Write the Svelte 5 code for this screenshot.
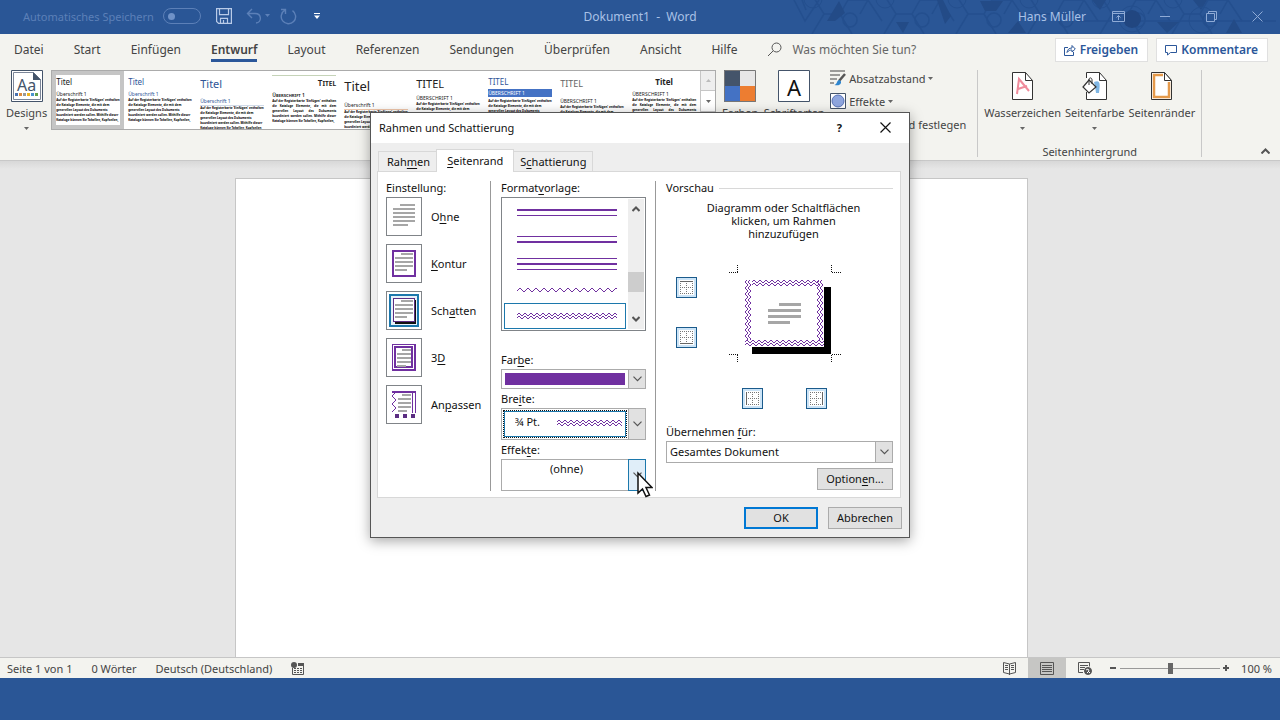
<script>
  const tabs = ['Datei', 'Start', 'Einfügen', 'Entwurf', 'Layout', 'Referenzen', 'Sendungen', 'Überprüfen', 'Ansicht', 'Hilfe'];
  let activeTab = $state('Entwurf');

  const sample = "Auf der Registerkarte 'Einfügen' enthalten die Kataloge Elemente, die mit dem generellen Layout des Dokuments koordiniert werden sollen. Mithilfe dieser Kataloge können Sie Tabellen, Kopfzeilen,";
  const themes = [
    { title: 'Titel', heading: 'Überschrift 1', look: 'plain', selected: true },
    { title: 'Titel', heading: 'Überschrift 1', look: 'blue' },
    { title: 'Titel', heading: 'Überschrift 1', look: 'blue large lined' },
    { title: 'Titel', heading: 'Überschrift 1', look: 'caps right' },
    { title: 'Titel', heading: 'Überschrift 1', look: 'huge lined warm' },
    { title: 'TITEL', heading: 'ÜBERSCHRIFT 1', look: 'large' },
    { title: 'TITEL', heading: 'ÜBERSCHRIFT 1', look: 'blue band' },
    { title: 'TITEL', heading: 'ÜBERSCHRIFT 1', look: 'grey' },
    { title: 'Titel', heading: 'ÜBERSCHRIFT 1', look: 'center' },
  ];

  // ── Dialog state ───────────────────────────────────────────────────────────
  // labels are split as [before, access key, after]
  const pages = [['Rah', 'm', 'en'], ['', 'S', 'eitenrand'], ['S', 'c', 'hattierung']];
  let page = $state(1);

  const settings = [
    { id: 'none', label: ['O', 'h', 'ne'] },
    { id: 'box', label: ['', 'K', 'ontur'] },
    { id: 'shadow', label: ['Sch', 'a', 'tten'] },
    { id: 'threed', label: ['3', 'D', ''] },
    { id: 'custom', label: ['An', 'p', 'assen'] },
  ];
  let setting = $state('shadow');

  const lineStyles = ['thick-thin', 'thin-thick', 'thin-thick-thin', 'wave', 'double-wave'];
  let lineStyle = $state('double-wave');

  let color = $state('Lila');
  let width = $state('¾ Pt.');
  let effect = $state('(ohne)');
  let scope = $state('Gesamtes Dokument');
  let zoom = $state(100);

  // ── Wave helpers ───────────────────────────────────────────────────────────
  const WIDE = [2, 1, 0, 0, 1, 2, 3, 3];
  const TIGHT = [1, 0, 0, 1, 2, 2];

  function wave(x, y, length, profile = WIDE, vertical = false) {
    let d = '';
    for (let i = 0; i <= length; i += 1) {
      const off = profile[i % profile.length];
      const px = vertical ? x + off : x + i;
      const py = vertical ? y + i : y + off;
      d += `M${px} ${py}h1v1h-1z`;
    }
    return d;
  }

  // two parallel waves, 3px apart
  function doubleWave(x, y, length, vertical = false) {
    return wave(x, y, length, TIGHT, vertical) + wave(vertical ? x + 3 : x, vertical ? y : y + 3, length, TIGHT, vertical);
  }

  // header ornament: one cell repeats every 72px
  const cells = [1, 2, 3, 4, 5, 6].map((i) => i * 72 + 2);
</script>

{#snippet key(parts)}{parts[0]}<u>{parts[1]}</u>{parts[2]}{/snippet}

{#snippet caret()}
  <svg class="caret" width="5" height="3" viewBox="0 0 5 3"><path d="M0 0h5L2.500 3z" fill="#666" /></svg>
{/snippet}

{#snippet chevron()}
  <svg width="9" height="6" viewBox="0 0 9 6"><path d="M.5 .7l4 4 4-4" fill="none" stroke="#555" stroke-width="1.200" /></svg>
{/snippet}

{#snippet textLines(x, y, w, gap, c)}
  <path d="M{x + w / 3} {y}h{w * 2 / 3}M{x} {y + gap}h{w}M{x} {y + gap * 2}h{w}M{x} {y + gap * 3}h{w}M{x} {y + gap * 4}h{w * 2 / 3}" stroke={c} stroke-width="2" />
{/snippet}

{#snippet edgeIcon(edge)}
  <svg width="15" height="15" viewBox="0 0 15 15" shape-rendering="crispEdges">
    <path d="M0 0h15v15h-15z" fill="#fff" />
    <path d="M1 1.500h13M1 7.500h13M1 13.500h13M1.500 1v13M7.500 1v13M13.500 1v13" stroke="#777" stroke-dasharray="1 1" />
    <path d={{ top: 'M1 1.500h13', bottom: 'M1 13.500h13', left: 'M1.500 1v13', right: 'M13.500 1v13' }[edge]} stroke="#666" />
  </svg>
{/snippet}

<div class="window">
  <header class="titlebar">
    <svg class="lattice" width="540" height="34" viewBox="0 0 540 34" fill="none" stroke="#244f8e">
      {#each cells as x}
        <path d="M{x} -2l10 16h16l8 -14M{x + 10} 14l-12 20M{x + 26} 14l12 20M{x + 34} 0h20l14 21M{x + 54} 0l-8 14" stroke-width="1.500" />
        <circle cx={x + 36} cy="20" r="7" stroke-width="1.500" />
        <circle cx={x - 1} cy="-1" r="9" />
      {/each}
      <path d="M54 0l11 21 14-21M62 0l4 10M336 21h200" stroke-width="1.500" />
      <path d="M87 21l12-20 6 12-10 8zM156 22h13l-6 11zM197 0h6l8 16-6 8zM240 1h23l-7 10h-11zM352 0h14l-6 10zM417 22h22l-12 11zM453 0h14l-6 10zM486 33l8-14 8 14zM268 33l10-12 8 12z" fill="#234b87" stroke="none" />
      <circle cx="392" cy="19" r="9" fill="#214680" stroke="none" /><circle cx="392" cy="19" r="13" /><circle cx="462" cy="20" r="13" />
    </svg>
    <div class="quick">
      <span class="autosave">Automatisches Speichern</span>
      <button class="toggle" aria-label="Automatisches Speichern"><span></span></button>
      <button class="save" aria-label="Speichern">
        <svg width="16" height="16" viewBox="0 0 16 16" fill="none" stroke="#b9cbe8" stroke-width="1.200"><path d="M.6 .6h14.800v14.800H2.600l-2-2zM3.500 .6v6h9v-6M4.500 15.400v-5h7v5M7.500 12v3" /></svg>
      </button>
      <button class="undo" aria-label="Rückgängig">
        <svg width="25" height="16" viewBox="0 0 25 16" fill="none" stroke="#5c80b8" stroke-width="1.400"><path d="M6 1L1.500 5.500 6 10M1.500 5.500H9c7 0 7 9 1 9.500" /><path d="M19 6h5l-2.500 3z" fill="#5c80b8" stroke="none" /></svg>
      </button>
      <button class="redo" aria-label="Wiederholen">
        <svg width="17" height="17" viewBox="0 0 17 17" fill="none" stroke="#5c80b8" stroke-width="1.400"><path d="M5 2.200A7.200 7.200 0 1 0 12.500 2.600M1 1.500h4.500V6" /></svg>
      </button>
      <button class="more" aria-label="Symbolleiste anpassen">
        <svg width="6" height="6" viewBox="0 0 6 6" fill="#fff"><path d="M0 0h6v1H0zM0 2.500h6L3 6z" /></svg>
      </button>
    </div>
    <div class="doc-title">Dokument1&nbsp; -&nbsp; Word</div>
    <div class="account">
      <span class="user">Hans Müller</span>
      <button aria-label="Menüband-Anzeigeoptionen"><svg width="13" height="11" viewBox="0 0 13 11" fill="none" stroke="#8fabd6"><path d="M.5 .5h12v10H.5zM.5 2.500h12M6.500 9V4.500M4.500 6.500l2-2 2 2" /></svg></button>
      <button aria-label="Minimieren"><svg width="11" height="11" viewBox="0 0 11 11"><path d="M0 5.500h10" stroke="#8fabd6" /></svg></button>
      <button aria-label="Verkleinern"><svg width="11" height="11" viewBox="0 0 11 11" fill="none" stroke="#8fabd6"><path d="M.5 2.500h8v8h-8zM2.500 2.500v-2h8v8h-2" /></svg></button>
      <button aria-label="Schließen"><svg width="11" height="11" viewBox="0 0 11 11"><path d="M.5 .5l10 10M10.500 .5l-10 10" stroke="#8fabd6" /></svg></button>
    </div>
  </header>

  <nav class="tabs">
    {#each tabs as tab}
      <button class:active={tab === activeTab} onclick={() => (activeTab = tab)}>{tab}</button>
    {/each}
    <label class="tell-me">
      <svg width="15" height="15" viewBox="0 0 15 15" fill="none" stroke="#555"><circle cx="9.500" cy="5.500" r="4.500" /><path d="M6.200 8.800L1 14" /></svg>
      <input type="text" placeholder="Was möchten Sie tun?" aria-label="Was möchten Sie tun?" />
    </label>
    <button class="share">
      <svg width="12" height="12" viewBox="0 0 12 12" fill="none" stroke="#2b579a"><path d="M4 3.500H.5v8h9V8M3 8.500c.5-3 2-4.500 5-4.500V1.500L11.300 5 8 8V6c-2 0-3.500.5-5 2.500z" /></svg>
      Freigeben
    </button>
    <button class="share">
      <svg width="12" height="12" viewBox="0 0 12 12" fill="none" stroke="#2b579a"><path d="M.5 1.500h11v7H5.500l-3 2.500V8.500h-2z" /></svg>
      Kommentare
    </button>
  </nav>

  <section class="ribbon">
    <button class="big designs">
      <svg width="32" height="32" viewBox="0 0 32 32">
        <path d="M.5 .5h31v31H.5z" fill="#fff" stroke="#44546a" /><path d="M2.500 2.500h20l7 7v20h-27z" fill="#fff" stroke="#7c8698" /><path d="M22 2v8h8z" fill="#44546a" />
        <text x="6" y="21" font-size="16" fill="#44546a">Aa</text>
        <path d="M4 23h3v3H4z" fill="#4a72b0" /><path d="M8 23h3v3H8z" fill="#e08a3c" /><path d="M12 23h3v3h-3z" fill="#999" /><path d="M16 23h3v3h-3z" fill="#f0b41c" /><path d="M20 23h3v3h-3z" fill="#4b94cf" /><path d="M24 23h3v3h-3z" fill="#62a04a" />
      </svg>
      <span>Designs</span>
      {@render caret()}
    </button>

    <div class="gallery">
      {#each themes as t}
        <button class="theme {t.look}" class:selected={t.selected}>
          <strong>{t.title}</strong>
          <em>{t.heading}</em>
          <span>{sample}</span>
        </button>
      {/each}
      <div class="gallery-scroll">
        <button disabled aria-label="Nach oben"><svg width="5" height="3" viewBox="0 0 5 3"><path d="M0 3h5L2.500 0z" fill="#bbb" /></svg></button>
        <button aria-label="Nach unten">{@render caret()}</button>
        <button aria-label="Weitere">{@render caret()}</button>
      </div>
    </div>

    <button class="big colors">
      <svg width="32" height="32" viewBox="0 0 32 32"><path d="M0 0h16v16H0z" fill="#44546a" /><path d="M16 0h16v16H16z" fill="#e7e6e6" /><path d="M0 16h16v16H0z" fill="#4472c4" /><path d="M16 16h16v16H16z" fill="#ed7d31" /><path d="M.5 .5h31v31H.5z" fill="none" stroke="#777" /></svg>
      <span>Farben</span>
    </button>
    <button class="big fonts">
      <svg width="32" height="32" viewBox="0 0 32 32"><path d="M.5 .5h31v31H.5z" fill="#fff" stroke="#44546a" /><text x="16" y="26" font-size="22" text-anchor="middle" fill="#111">A</text></svg>
      <span>Schriftarten</span>
    </button>
    <div class="stack">
      <button>
        <svg width="16" height="16" viewBox="0 0 16 16"><path d="M0 1h15M0 5h10M0 9h7M0 13h4" stroke="#444" stroke-width="1.200" /><path d="M15 4l-6 7" stroke="#555" stroke-width="2.500" /><path d="M9.500 10c-3 0-2 4-5 5 3 1 7 0 6.500-3.500z" fill="#2e86cf" /></svg>
        Absatzabstand {@render caret()}
      </button>
      <button>
        <svg width="16" height="16" viewBox="0 0 16 16"><path d="M.5 .5h15v15H.5z" fill="#fff" stroke="#44546a" /><circle cx="8" cy="8" r="6" fill="#8fa6de" stroke="#5571b5" /></svg>
        Effekte {@render caret()}
      </button>
      <button>Als Standard festlegen</button>
    </div>

    <div class="group">
      <div class="group-row">
        <button class="big">
          <svg width="22" height="28" viewBox="0 0 22 28"><path d="M.5 .5h13l7 8v19H.5z" fill="#fff" stroke="#333" /><path d="M13.500 .5v8h7" fill="none" stroke="#333" /><path d="M5 22L7 7l10 12M6 17l9-3" fill="none" stroke="#f08b9b" stroke-width="2" /></svg>
          <span>Wasserzeichen</span>{@render caret()}
        </button>
        <button class="big">
          <svg width="26" height="28" viewBox="0 0 26 28"><path d="M4.500 6V.5h13l7 8v19h-20V20" fill="#fff" stroke="#333" /><path d="M17.500 .5v8h7" fill="none" stroke="#333" /><path d="M12 10c7-3 6 3 5 11h-3l-1-7z" fill="#7fb6e4" /><path d="M7 8l7 7-7 6-6-6z" fill="#fff" stroke="#333" stroke-width="1.200" /><path d="M7 13V7c1-2 3-1 3 1v4" fill="none" stroke="#333" /></svg>
          <span>Seitenfarbe</span>{@render caret()}
        </button>
        <button class="big">
          <svg width="22" height="28" viewBox="0 0 22 28"><path d="M.5 .5h13l7 8v19H.5z" fill="#fff" stroke="#333" /><path d="M12 3H3v22h15V10" fill="none" stroke="#e59a4b" stroke-width="2.500" /><path d="M13.500 .5v8h7z" fill="#fff" stroke="#333" /></svg>
          <span>Seitenränder</span>
        </button>
      </div>
      <div class="group-name">Seitenhintergrund</div>
    </div>
    <button class="collapse" aria-label="Menüband reduzieren"><svg width="9" height="6" viewBox="0 0 9 6"><path d="M.5 5.500l4-4 4 4" fill="none" stroke="#555" stroke-width="2" /></svg></button>
  </section>

  <main class="workspace"><div class="paper"></div></main>

  <footer class="status">
    <span>Seite 1 von 1</span>
    <span>0 Wörter</span>
    <span>Deutsch (Deutschland)</span>
    <svg width="13" height="13" viewBox="0 0 13 13"><path d="M1.500 6v6.500h11V3M3 6.500h8M3 8.500h8M3 10.500h8" fill="none" stroke="#555" /><path d="M5.500 5v7M8.500 5v7" stroke="#f3f3ef" /><circle cx="3" cy="3" r="3" fill="#555" /><path d="M7 1h6v3H7z" fill="#555" /></svg>
    <div class="views">
      <button aria-label="Lesemodus"><svg width="13" height="13" viewBox="0 0 13 13" fill="none" stroke="#555"><path d="M6.500 2L.5 .5v10l6 1.500 6-1.500V.5zM6.500 2v11M2 3.500h3M2 5.500h3M2 7.500h3M8 3.500h3M8 5.500h3M8 7.500h3" /></svg></button>
      <button class="on" aria-label="Drucklayout"><svg width="14" height="13" viewBox="0 0 14 13" fill="none" stroke="#555"><path d="M.5 .5h13v12H.5zM2 3.500h10M2 5.500h10M2 7.500h10M2 9.500h10" /></svg></button>
      <button aria-label="Weblayout"><svg width="14" height="13" viewBox="0 0 14 13" fill="none" stroke="#555"><path d="M5 10.500H.5V.5h11v4M2 3.500h8M2 5.500h5M2 7.500h4" /><circle cx="10" cy="9" r="3.500" fill="#555" /><path d="M8 8l2-1 1 2-2 2M11 11l1-1" stroke="#fff" /></svg></button>
    </div>
    <button class="step" aria-label="Verkleinern"><svg width="6" height="6" viewBox="0 0 6 6"><path d="M0 3h6" stroke="#555" stroke-width="2" /></svg></button>
    <input type="range" min="10" max="190" bind:value={zoom} aria-label="Zoom" />
    <button class="step" aria-label="Vergrößern"><svg width="8" height="8" viewBox="0 0 8 8"><path d="M1 4h6M4 1v6" stroke="#555" stroke-width="2" /></svg></button>
    <span class="percent">{zoom} %</span>
  </footer>
  <div class="taskband"></div>

  <div class="dialog" role="dialog" aria-labelledby="dialog-title">
    <div class="dialog-head">
      <h1 id="dialog-title">Rahmen und Schattierung</h1>
      <button aria-label="Hilfe"><b>?</b></button>
      <button aria-label="Schließen"><svg width="11" height="11" viewBox="0 0 11 11"><path d="M.5 .5l10 10M10.500 .5l-10 10" stroke="#111" stroke-width="1.200" /></svg></button>
    </div>

    <div class="page-tabs" role="tablist">
      {#each pages as p, i}
        <button role="tab" aria-selected={i === page} class:active={i === page} onclick={() => (page = i)}>{@render key(p)}</button>
      {/each}
    </div>

    <div class="panel">
      <fieldset class="col settings">
        <legend>Einstellung:</legend>
        {#each settings as s}
          <label class="setting">
            <input type="radio" name="setting" value={s.id} bind:group={setting} />
            <svg width="36" height="39" viewBox="0 0 36 39" shape-rendering="crispEdges">
              <path d="M.5 .5h35v38H.5z" fill="#fff" stroke="#808488" />
              {#if s.id === setting}<path d="M4 4h28v31H4z" fill="#e6f1fa" stroke="#1c78ac" stroke-width="2" />{/if}
              {#if s.id === 'none'}
                {@render textLines(7, 8, 22, 4, '#a6a6a6')}
                <path d="M22 24h7M7 28h15" stroke="#a6a6a6" stroke-width="2" />
              {:else if s.id === 'box'}
                <path d="M7 7h22v25H7z" fill="#fff" stroke="#7030a0" stroke-width="2" />
                {@render textLines(9, 10, 18, 4, '#a6a6a6')}
              {:else if s.id === 'shadow'}
                <path d="M9 9h21v24H9z" fill="#111" />
                <path d="M7.500 7.500h21v23h-21z" fill="#fff" stroke="#5b2d82" />
                {@render textLines(9, 10, 18, 4, '#a6a6a6')}
              {:else if s.id === 'threed'}
                <path d="M6.500 6.500h23v26h-23z" fill="#fff" stroke="#7030a0" /><path d="M6 32h24M29 6v26" stroke="#7030a0" stroke-width="2" />
                <path d="M9 9h17v20H9z" fill="#fff" stroke="#7030a0" stroke-width="2" />
                {@render textLines(11, 12, 14, 4, '#a6a6a6')}
              {:else}
                <path d="M6 7h24" stroke="#7030a0" stroke-width="2" /><path d="M26.500 7v21M29.500 7v21" stroke="#7030a0" />
                <path d={wave(6, 8, 18, WIDE, true)} fill="#7030a0" />
                <path d="M9 29h4v4H9zM17 29h4v4h-4zM25 29h4v4h-4z" fill="#5b2d82" />
                {@render textLines(12, 10, 13, 4, '#a6a6a6')}
              {/if}
            </svg>
            <span>{@render key(s.label)}</span>
          </label>
        {/each}
      </fieldset>

      <div class="col line">
        <span class="caption" id="style-label">Format<u>v</u>orlage:</span>
        <div class="listbox">
          <div class="options" role="listbox" aria-labelledby="style-label">
            {#each lineStyles as l}
              <button role="option" aria-selected={l === lineStyle} aria-label={l} class:chosen={l === lineStyle} onclick={() => (lineStyle = l)}>
                <svg width="100" height="12" viewBox="0 0 100 12" shape-rendering="crispEdges" stroke="#7030a0">
                  {#if l === 'thick-thin'}<path d="M0 4h100" stroke-width="2" /><path d="M0 9.500h100" />
                  {:else if l === 'thin-thick'}<path d="M0 4.500h100" /><path d="M0 10h100" stroke-width="2" />
                  {:else if l === 'thin-thick-thin'}<path d="M0 .5h100M0 11.500h100" /><path d="M0 6h100" stroke-width="2" />
                  {:else if l === 'wave'}<path d={wave(0, 4, 99)} fill="#7030a0" stroke="none" />
                  {:else}<path d={doubleWave(0, 3, 99)} fill="#7030a0" stroke="none" />{/if}
                </svg>
              </button>
            {/each}
          </div>
          <div class="scroll">
            <button aria-label="Nach oben"><svg width="8" height="6" viewBox="0 0 8 6"><path d="M.5 5l3.500-3.500L7.500 5" fill="none" stroke="#555" stroke-width="2" /></svg></button>
            <div class="thumb"></div>
            <button aria-label="Nach unten"><svg width="8" height="6" viewBox="0 0 8 6"><path d="M.5 1l3.500 3.500L7.500 1" fill="none" stroke="#555" stroke-width="2" /></svg></button>
          </div>
        </div>

        <label class="caption first" for="color">Far<u>b</u>e:</label>
        <div class="combo color">
          <select id="color" bind:value={color}><option>Lila</option></select>
          <span class="swatch"></span>
          <span class="drop">{@render chevron()}</span>
        </div>

        <label class="caption" for="width">Bre<u>i</u>te:</label>
        <div class="combo tall width">
          <select id="width" bind:value={width}><option>¾ Pt.</option></select>
          <svg class="sample" width="65" height="6" viewBox="0 0 65 6" shape-rendering="crispEdges"><path d={doubleWave(0, 0, 64)} fill="#7030a0" /></svg>
          <span class="drop">{@render chevron()}</span>
        </div>

        <label class="caption" for="effect">Effek<u>t</u>e:</label>
        <div class="combo tall effect">
          <select id="effect" bind:value={effect}><option>(ohne)</option></select>
          <span class="drop hot">{@render chevron()}</span>
          <svg class="pointer" width="17" height="28" viewBox="0 0 17 28"><path d="M2 2v20l4.500-4 3.500 7.500 3.500-1.500-3.500-7.500h6z" fill="#fff" stroke="#111" stroke-width="1.500" /></svg>
        </div>
      </div>

      <div class="col preview">
        <div class="caption ruled">Vorschau</div>
        <p>Diagramm oder Schaltflächen klicken, um Rahmen hinzuzufügen</p>
        <div class="diagram">
          <div class="sides">
            <button class="edge" aria-label="Rahmenlinie oben">{@render edgeIcon('top')}</button>
            <button class="edge" aria-label="Rahmenlinie unten">{@render edgeIcon('bottom')}</button>
          </div>
          <svg width="112" height="98" viewBox="729 264 112 98" shape-rendering="crispEdges">
            <path d="M729 272.500h9M737.500 265v7M832 272.500h9M831.500 265v7M729 354.500h9M737.500 355v7M832 354.500h9M831.500 355v7" stroke="#111" stroke-dasharray="1 1" />
            <path d="M752 287h79v67h-79z" fill="#000" />
            <path d="M745 280h79v67h-79z" fill="#fff" />
            <path d={doubleWave(752, 280, 66) + doubleWave(745, 340, 78)} fill="#7030a0" />
            <path d={doubleWave(745, 280, 59, true) + doubleWave(817, 280, 59, true)} fill="#7030a0" />
            <path d="M779 304.500h22M768 310.500h33M768 316.500h33M768 322.500h22" stroke="#a6a6a6" stroke-width="3" />
          </svg>
          <div class="ends">
            <button class="edge" aria-label="Rahmenlinie links">{@render edgeIcon('left')}</button>
            <button class="edge" aria-label="Rahmenlinie rechts">{@render edgeIcon('right')}</button>
          </div>
        </div>
        <label class="caption" for="scope">Übernehmen <u>f</u>ür:</label>
        <div class="combo scope">
          <select id="scope" bind:value={scope}><option>Gesamtes Dokument</option></select>
          <span class="drop">{@render chevron()}</span>
        </div>
        <button class="push options-btn">Option<u>e</u>n...</button>
      </div>
    </div>

    <div class="dialog-foot">
      <button class="push default">OK</button>
      <button class="push">Abbrechen</button>
    </div>
  </div>
</div>

<style>
  :global(body) {
    margin: 0;
    font-family: "Noto Sans", "Open Sans", sans-serif;
    background: #2a5696;
  }

  .window {
    position: relative;
    display: flex;
    flex-direction: column;
    min-height: 100vh;
    font-size: 11px;
    color: #444;
    box-sizing: border-box;
  }

  .window * { box-sizing: border-box; }
  svg { display: block; flex: none; }

  button {
    font: inherit;
    color: inherit;
    background: none;
    border: 0;
    padding: 0;
    margin: 0;
    white-space: nowrap;
  }

  /* title bar */
  .titlebar {
    position: relative;
    display: grid;
    grid-template-columns: 1fr auto 1fr;
    align-items: center;
    height: 34px;
    padding-bottom: 2px;
    font-size: 12px;
    color: #a9c1e6;
    background: #2a5696;
  }

  .lattice { position: absolute; top: 0; right: 0; }
  .quick, .account { position: relative; display: flex; align-items: center; }
  .quick { padding-left: 23px; }
  .autosave { font-size: 11px; color: #5c80b8; white-space: nowrap; }

  .toggle {
    width: 38px;
    height: 16px;
    margin-left: 9px;
    border: 1px solid #5c80b8;
    border-radius: 8px;
  }

  .toggle span {
    display: block;
    width: 7px;
    height: 7px;
    margin-left: 4px;
    border-radius: 50%;
    background: #6f92c8;
  }

  .save { margin-left: 15px; }
  .undo { margin-left: 14px; }
  .redo { margin-left: 9px; }
  .more { margin-left: 17px; }
  .account { justify-content: flex-end; padding-right: 17px; }
  .user { margin-right: 26px; }
  .account button { margin-left: 35px; }
  .account .user + button { margin-left: 0; }

  /* ribbon tabs */
  .tabs {
    display: flex;
    align-items: center;
    gap: 30px;
    height: 31px;
    padding: 0 12px 0 14px;
    font-size: 12px;
    background: #f3f3ef;
  }

  .tabs > button { line-height: 18px; border-bottom: 3px solid transparent; padding-top: 3px; }
  .tabs > .active { font-weight: 600; border-color: #2b579a; }

  .tell-me { display: flex; flex: 1; align-items: center; gap: 10px; }
  .tell-me input {
    flex: 1;
    min-width: 0;
    padding: 0;
    border: 0;
    font: inherit;
    background: none;
  }
  .tell-me input::placeholder { color: #666; opacity: 1; }

  .tabs > .share {
    display: flex;
    align-items: center;
    gap: 4px;
    height: 24px;
    padding: 0 9px 0 8px;
    font-weight: 600;
    color: #2b579a;
    background: #fff;
    border: 1px solid #e0e0e0;
  }
  .share + .share { margin-left: -22px; }

  /* ribbon */
  .ribbon {
    display: flex;
    align-items: flex-start;
    height: 96px;
    padding: 5px 10px 4px 6px;
    background: #f3f3ef;
    border-bottom: 1px solid #c8c8c8;
  }

  .big {
    display: flex;
    flex-direction: column;
    align-items: center;
    line-height: 16px;
  }
  .big span { margin: 3px 0 6px; }

  .gallery {
    display: flex;
    height: 60px;
    margin-left: 4px;
    background: #fff;
    border: 1px solid #ababab;
  }

  .theme {
    display: flex;
    flex-direction: column;
    width: 72px;
    height: 58px;
    padding: 4px;
    overflow: hidden;
    text-align: left;
    white-space: normal;
    color: #222;
  }
  .theme.selected { border: 4px solid #c5c5c5; padding: 0; }
  .theme strong { font-size: 8px; line-height: 12px; font-weight: 400; padding-top: 1px; }
  .theme em { font-size: 5px; line-height: 8px; font-style: normal; padding-top: 2px; }
  .theme span { font-size: 3px; line-height: 5px; font-weight: 700; color: #000; }
  .theme.blue strong, .theme.blue em { color: #2f5597; }
  .theme.large strong { font-size: 11px; line-height: 16px; }
  .theme.huge strong { font-size: 13px; line-height: 20px; }
  .theme.lined em { padding-top: 5px; border-bottom: 1px solid #d0dae8; }
  .theme.warm em { border-color: #f0c8ac; }
  .theme.caps strong, .theme.caps em { font-variant: small-caps; font-weight: 600; }
  .theme.right strong { text-align: right; border-top: 1px solid #c5d3b8; }
  .theme.right span, .theme.center span { text-align: justify; }
  .theme.band em { color: #fff; background: #4472c4; padding: 0; margin: 1px 0 2px; }
  .theme.grey strong { font-size: 9px; line-height: 16px; color: #666; }
  .theme.grey em { padding-top: 5px; }
  .theme.center strong { text-align: center; font-weight: 700; }

  .gallery-scroll { display: grid; grid-template-rows: 20px 21px 1fr; width: 15px; }
  .gallery-scroll button { display: grid; place-items: center; border: 1px solid #c6c6c6; border-width: 0 0 1px 1px; }
  .gallery-scroll button:disabled { background: #eee; }

  .colors { width: 34px; margin-left: 7px; }
  .fonts { width: 60px; margin-left: 7px; }

  .stack { display: flex; flex-direction: column; gap: 7px; margin-left: 6px; width: 147px; }
  .stack button { display: flex; align-items: center; gap: 3px; height: 16px; }
  .stack button:last-child { justify-content: flex-end; padding-right: 11px; }

  .group {
    display: flex;
    flex-direction: column;
    justify-content: space-between;
    height: 87px;
    padding: 0 6px;
    border: 1px solid #c8c8c8;
    border-width: 0 1px;
  }
  .group-row { display: flex; gap: 4px; padding-top: 2px; }
  .group-row .big span { margin: 5px 0 6px; }
  .group-name { text-align: center; line-height: 10px; }
  .collapse { margin: auto 0 2px auto; }

  /* document */
  .workspace {
    display: flex;
    flex: 1;
    justify-content: center;
    padding: 17px 17px 0 0;
    background: linear-gradient(#d8d8d8, #e6e6e6 8px);
  }
  .paper { width: 793px; background: #fff; border: 1px solid #c6c6c6; border-bottom: 0; }

  /* status bar */
  .status {
    display: flex;
    align-items: center;
    height: 21px;
    padding: 0 8px 0 7px;
    background: #f3f3ef;
    border-top: 1px solid #c6c6c6;
  }
  .status > span { margin-right: 19px; }
  .views { display: flex; align-self: stretch; margin-left: auto; margin-right: 6px; }
  .views button { display: grid; place-items: center; width: 38px; }
  .views .on { background: #c6c6c4; }

  .status input {
    appearance: none;
    width: 100px;
    height: 11px;
    margin: 0 2px 0 4px;
    background: linear-gradient(#999, #999) center / 100% 1px no-repeat;
  }
  .status input::-webkit-slider-thumb {
    appearance: none;
    width: 5px;
    height: 11px;
    background: #666;
  }
  .status > .percent { margin: 0 0 0 11px; }
  .taskband { height: 42px; background: #2a5696; }

  /* dialog */
  .dialog {
    position: absolute;
    top: 112px;
    left: 50%;
    width: 540px;
    margin-left: -270px;
    color: #111;
    background: #eee;
    border: 1px solid #555;
    box-shadow: 0 3px 12px rgba(0, 0, 0, 0.35);
  }
  .dialog u { text-underline-offset: 2px; }

  .dialog-head {
    display: flex;
    align-items: center;
    height: 30px;
    padding: 0 18px 2px 8px;
    background: #fff;
  }
  .dialog-head h1 { flex: 1; margin: 0; font-size: 11px; font-weight: 400; }
  .dialog-head button { margin-left: 38px; }

  .page-tabs { display: flex; align-items: flex-end; height: 28px; padding: 0 7px; }
  .page-tabs button {
    height: 20px;
    padding: 0 6px 0 8px;
    border: 1px solid #d8d8d8;
    border-bottom: 0;
  }
  .page-tabs button:last-child { padding-left: 6px; }
  .page-tabs .active {
    position: relative;
    z-index: 1;
    height: 23px;
    padding: 0 10px 2px;
    margin: 0 -1px -1px;
    background: #fff;
  }

  .panel {
    display: grid;
    grid-template-columns: 112px 165px 1fr;
    margin: 0 8px 0 6px;
    padding: 9px 0 6px;
    background: #fff;
    border: 1px solid #d8d8d8;
  }

  .col { display: flex; flex-direction: column; min-width: 0; margin: 0; border: 0; }
  .caption, legend { display: block; padding: 0; line-height: 14px; }

  .settings { display: block; padding: 0 0 0 8px; }
  .settings legend { margin-bottom: 2px; }
  .setting { display: flex; align-items: center; gap: 9px; margin-bottom: 8px; }
  .setting input { position: absolute; opacity: 0; pointer-events: none; }

  .line { padding: 0 9px 0 10px; border-left: 1px solid #999; }
  .listbox {
    display: flex;
    height: 134px;
    margin-top: 2px;
    padding: 1px;
    border: 1px solid #808488;
  }
  .options { flex: 1; display: flex; flex-direction: column; padding: 0 2px 0 1px; }
  .options button { display: grid; place-items: center; height: 26px; padding-left: 3px; border: 1px solid transparent; }
  .options .chosen { border-color: #1c78ac; }
  .scroll { display: flex; flex-direction: column; align-items: stretch; width: 16px; background: #eee; }
  .scroll button { display: grid; place-items: center; height: 20px; }
  .thumb { height: 20px; margin-top: 53px; margin-bottom: auto; background: #cdcdcd; }

  .caption.first { margin-top: 22px; }
  .line .caption + .combo { margin-top: 2px; }
  .combo + .caption { margin-top: 3px; }

  .combo { position: relative; height: 20px; }
  .combo.tall { height: 32px; }
  .combo select {
    appearance: none;
    width: 100%;
    height: 100%;
    padding: 0 20px 2px 3px;
    font: inherit;
    color: #111;
    background: #fff;
    border: 1px solid #ababab;
    border-radius: 0;
  }
  .drop {
    position: absolute;
    top: 0;
    right: 0;
    bottom: 0;
    display: grid;
    place-items: center;
    width: 18px;
    background: #e1e1e1;
    border: 1px solid #ababab;
    pointer-events: none;
  }
  .drop.hot { background: #e0eef9; border-color: #1c78ac; }
  .combo.color select { color: transparent; }
  .swatch { position: absolute; inset: 4px 21px 4px 4px; background: #7030a0; pointer-events: none; }
  .combo.width select { padding: 0 0 6px 13px; }
  .combo.width::before {
    content: '';
    position: absolute;
    inset: 3px 20px 3px 3px;
    border: 1px solid #1c78ac;
    outline: 1px dotted #111;
    pointer-events: none;
  }
  .sample { position: absolute; left: 56px; top: 12px; pointer-events: none; }
  .combo.effect select { padding-bottom: 14px; padding-left: 6px; text-align-last: center; }
  .pointer { position: absolute; right: -7px; top: 12px; pointer-events: none; }

  .preview { padding: 0 7px 0 10px; border-left: 1px solid #999; }
  .ruled { display: flex; align-items: center; gap: 5px; }
  .ruled::after { content: ''; flex: 1; height: 1px; background: #d8d8d8; }
  .preview p { width: 168px; margin: 6px auto 0; padding-left: 8px; text-align: center; line-height: 13px; }
  .diagram {
    display: grid;
    grid-template-columns: 21px 112px;
    column-gap: 32px;
    row-gap: 26px;
    padding: 24px 0 0 10px;
  }
  .sides { display: flex; flex-direction: column; gap: 29px; padding-top: 13px; }
  .ends { grid-column: 2; display: flex; gap: 43px; padding-left: 13px; }
  .edge {
    display: grid;
    place-items: center;
    width: 21px;
    height: 21px;
    background: #cce4f7;
    border: 1px solid #1b5b8c;
  }
  .diagram + .caption { margin-top: 16px; }
  .combo.scope { height: 22px; margin-top: 2px; }

  .push {
    height: 22px;
    min-width: 74px;
    padding-bottom: 2px;
    background: #e1e1e1;
    border: 1px solid #ababab;
  }
  .options-btn { align-self: flex-end; width: 76px; margin-top: 5px; }
  .push.default { border: 2px solid #0078d4; }

  .dialog-foot { display: flex; justify-content: flex-end; gap: 10px; padding: 9px 7px 8px; }
</style>
